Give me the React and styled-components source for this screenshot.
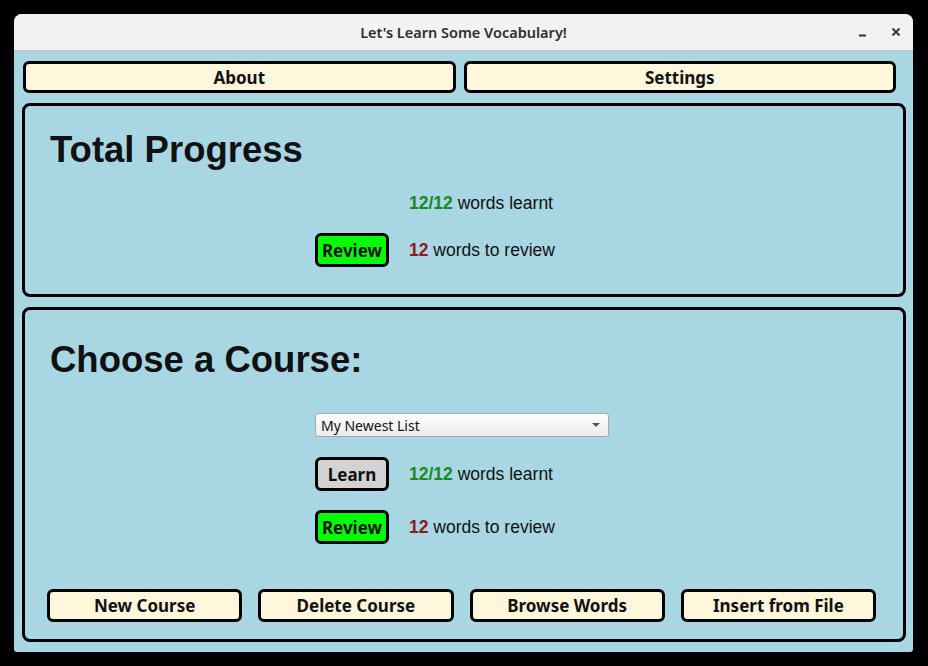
import React from "react";
import styled, { createGlobalStyle } from "styled-components";

const GlobalStyle = createGlobalStyle`
  html, body {
    margin: 0;
    padding: 0;
    background: #000;
  }
  body {
    font-family: "Liberation Sans", Arial, sans-serif;
  }
`;

const Screen = styled.div`
  width: 928px;
  height: 666px;
  background: #000;
  padding: 14px 0 0 14px;
  box-sizing: border-box;
`;

const Window = styled.div`
  width: 899px;
  height: 638px;
  display: flex;
  flex-direction: column;
  border-radius: 8px 8px 3px 3px;
  overflow: hidden;
  background: #a9d6e3;
`;

const TitleBar = styled.div`
  height: 36px;
  flex: none;
  background: #f2f2f2;
  border-bottom: 1px solid #c4c4c4;
  display: grid;
  grid-template-columns: 80px 1fr 80px;
  align-items: center;
`;

const Title = styled.div`
  grid-column: 2;
  text-align: center;
  font-family: "Noto Sans", sans-serif;
  font-weight: 600;
  font-size: 14.5px;
  color: #2e2e2e;
`;

const WindowControls = styled.div`
  display: flex;
  justify-content: flex-end;
  align-items: center;
  gap: 24px;
  padding-right: 12px;
  color: #333;
`;

const Content = styled.div`
  flex: 1;
  display: flex;
  flex-direction: column;
  gap: 10px;
  padding: 10px 7px 10px 8px;
`;

const TopRow = styled.div`
  display: grid;
  grid-template-columns: 1fr 1fr;
  gap: 8px;
  margin: 0 10px 0 1px;
`;

const Button = styled.button`
  box-sizing: border-box;
  height: ${(p) => p.$h || 32}px;
  width: ${(p) => (p.$w ? p.$w + "px" : "auto")};
  border: 3px solid #000;
  border-radius: 6px;
  background: ${(p) => p.$bg || "#fff7dc"};
  font-family: "Noto Sans", sans-serif;
  font-weight: 700;
  font-size: 17px;
  color: #111;
  padding: 0;
  line-height: 1;
  cursor: pointer;
`;

const Panel = styled.section`
  box-sizing: border-box;
  height: ${(p) => p.$h}px;
  border: 3px solid #000;
  border-radius: 8px;
  padding: ${(p) => p.$pad};
  display: flex;
  flex-direction: column;
`;

const Heading = styled.h1`
  margin: 0 0 0 2px;
  font-family: "Liberation Sans", Arial, sans-serif;
  font-weight: 700;
  font-size: 36.5px;
  line-height: 40px;
  color: #111;
`;

const Stats = styled.div`
  display: grid;
  grid-template-columns: 74px auto;
  column-gap: 20px;
  row-gap: ${(p) => p.$gap}px;
  margin-left: 267px;
  margin-top: ${(p) => p.$top}px;
  align-items: center;
  grid-auto-rows: auto;
`;

const Label = styled.div`
  grid-column: 2;
  font-size: 17.5px;
  line-height: 34px;
  color: #111;
`;

const Good = styled.span`
  color: #178a22;
  font-weight: 700;
`;

const Due = styled.span`
  color: #8e1a1a;
  font-weight: 700;
`;

const Combo = styled.div`
  grid-column: 1 / span 2;
  box-sizing: border-box;
  width: 294px;
  height: 24px;
  margin-bottom: 1px;
  border: 1px solid #a8a8a8;
  border-radius: 3px;
  background: linear-gradient(#fefefe, #ececec);
  display: flex;
  align-items: center;
  justify-content: space-between;
  padding: 0 8px 0 5px;
  font-family: "Noto Sans", sans-serif;
  font-size: 14px;
  color: #111;
`;

const Arrow = styled.span`
  width: 0;
  height: 0;
  border-left: 4px solid transparent;
  border-right: 4px solid transparent;
  border-top: 4px solid #555;
`;

const Spacer = styled.div`
  flex: 1;
`;

const BottomRow = styled.div`
  display: grid;
  grid-template-columns: repeat(4, 1fr);
  gap: 16px;
  margin-left: -1px;
  padding-right: 7px;
`;

export default function App() {
  return (
    <>
      <GlobalStyle />
      <Screen>
        <Window>
          <TitleBar>
            <Title>Let's Learn Some Vocabulary!</Title>
            <WindowControls>
              <svg width="9" height="10" viewBox="0 0 9 10">
                <path d="M1 8.5h7" stroke="#333" strokeWidth="2" />
              </svg>
              <svg width="10" height="10" viewBox="0 0 10 10">
                <path d="M1.5 1.5l7 7M8.5 1.5l-7 7" stroke="#333" strokeWidth="1.8" />
              </svg>
            </WindowControls>
          </TitleBar>
          <Content>
            <TopRow>
              <Button>About</Button>
              <Button>Settings</Button>
            </TopRow>

            <Panel $h={194} $pad="24px 20px 0 23px">
              <Heading>Total Progress</Heading>
              <Stats $top={16} $gap={13}>
                <Label>
                  <Good>12/12</Good> words learnt
                </Label>
                <Button $w={74} $h={34} $bg="#00ff00">Review</Button>
                <Label>
                  <Due>12</Due> words to review
                </Label>
              </Stats>
            </Panel>

            <Panel $h={335} $pad="30px 20px 17px 23px">
              <Heading>Choose a Course:</Heading>
              <Stats $top={33} $gap={19}>
                <Combo>
                  My Newest List
                  <Arrow />
                </Combo>
                <Button $w={74} $h={34} $bg="#d3d3d3">Learn</Button>
                <Label>
                  <Good>12/12</Good> words learnt
                </Label>
                <Button $w={74} $h={34} $bg="#00ff00">Review</Button>
                <Label>
                  <Due>12</Due> words to review
                </Label>
              </Stats>
              <Spacer />
              <BottomRow>
                <Button $h={33}>New Course</Button>
                <Button $h={33}>Delete Course</Button>
                <Button $h={33}>Browse Words</Button>
                <Button $h={33}>Insert from File</Button>
              </BottomRow>
            </Panel>
          </Content>
        </Window>
      </Screen>
    </>
  );
}
